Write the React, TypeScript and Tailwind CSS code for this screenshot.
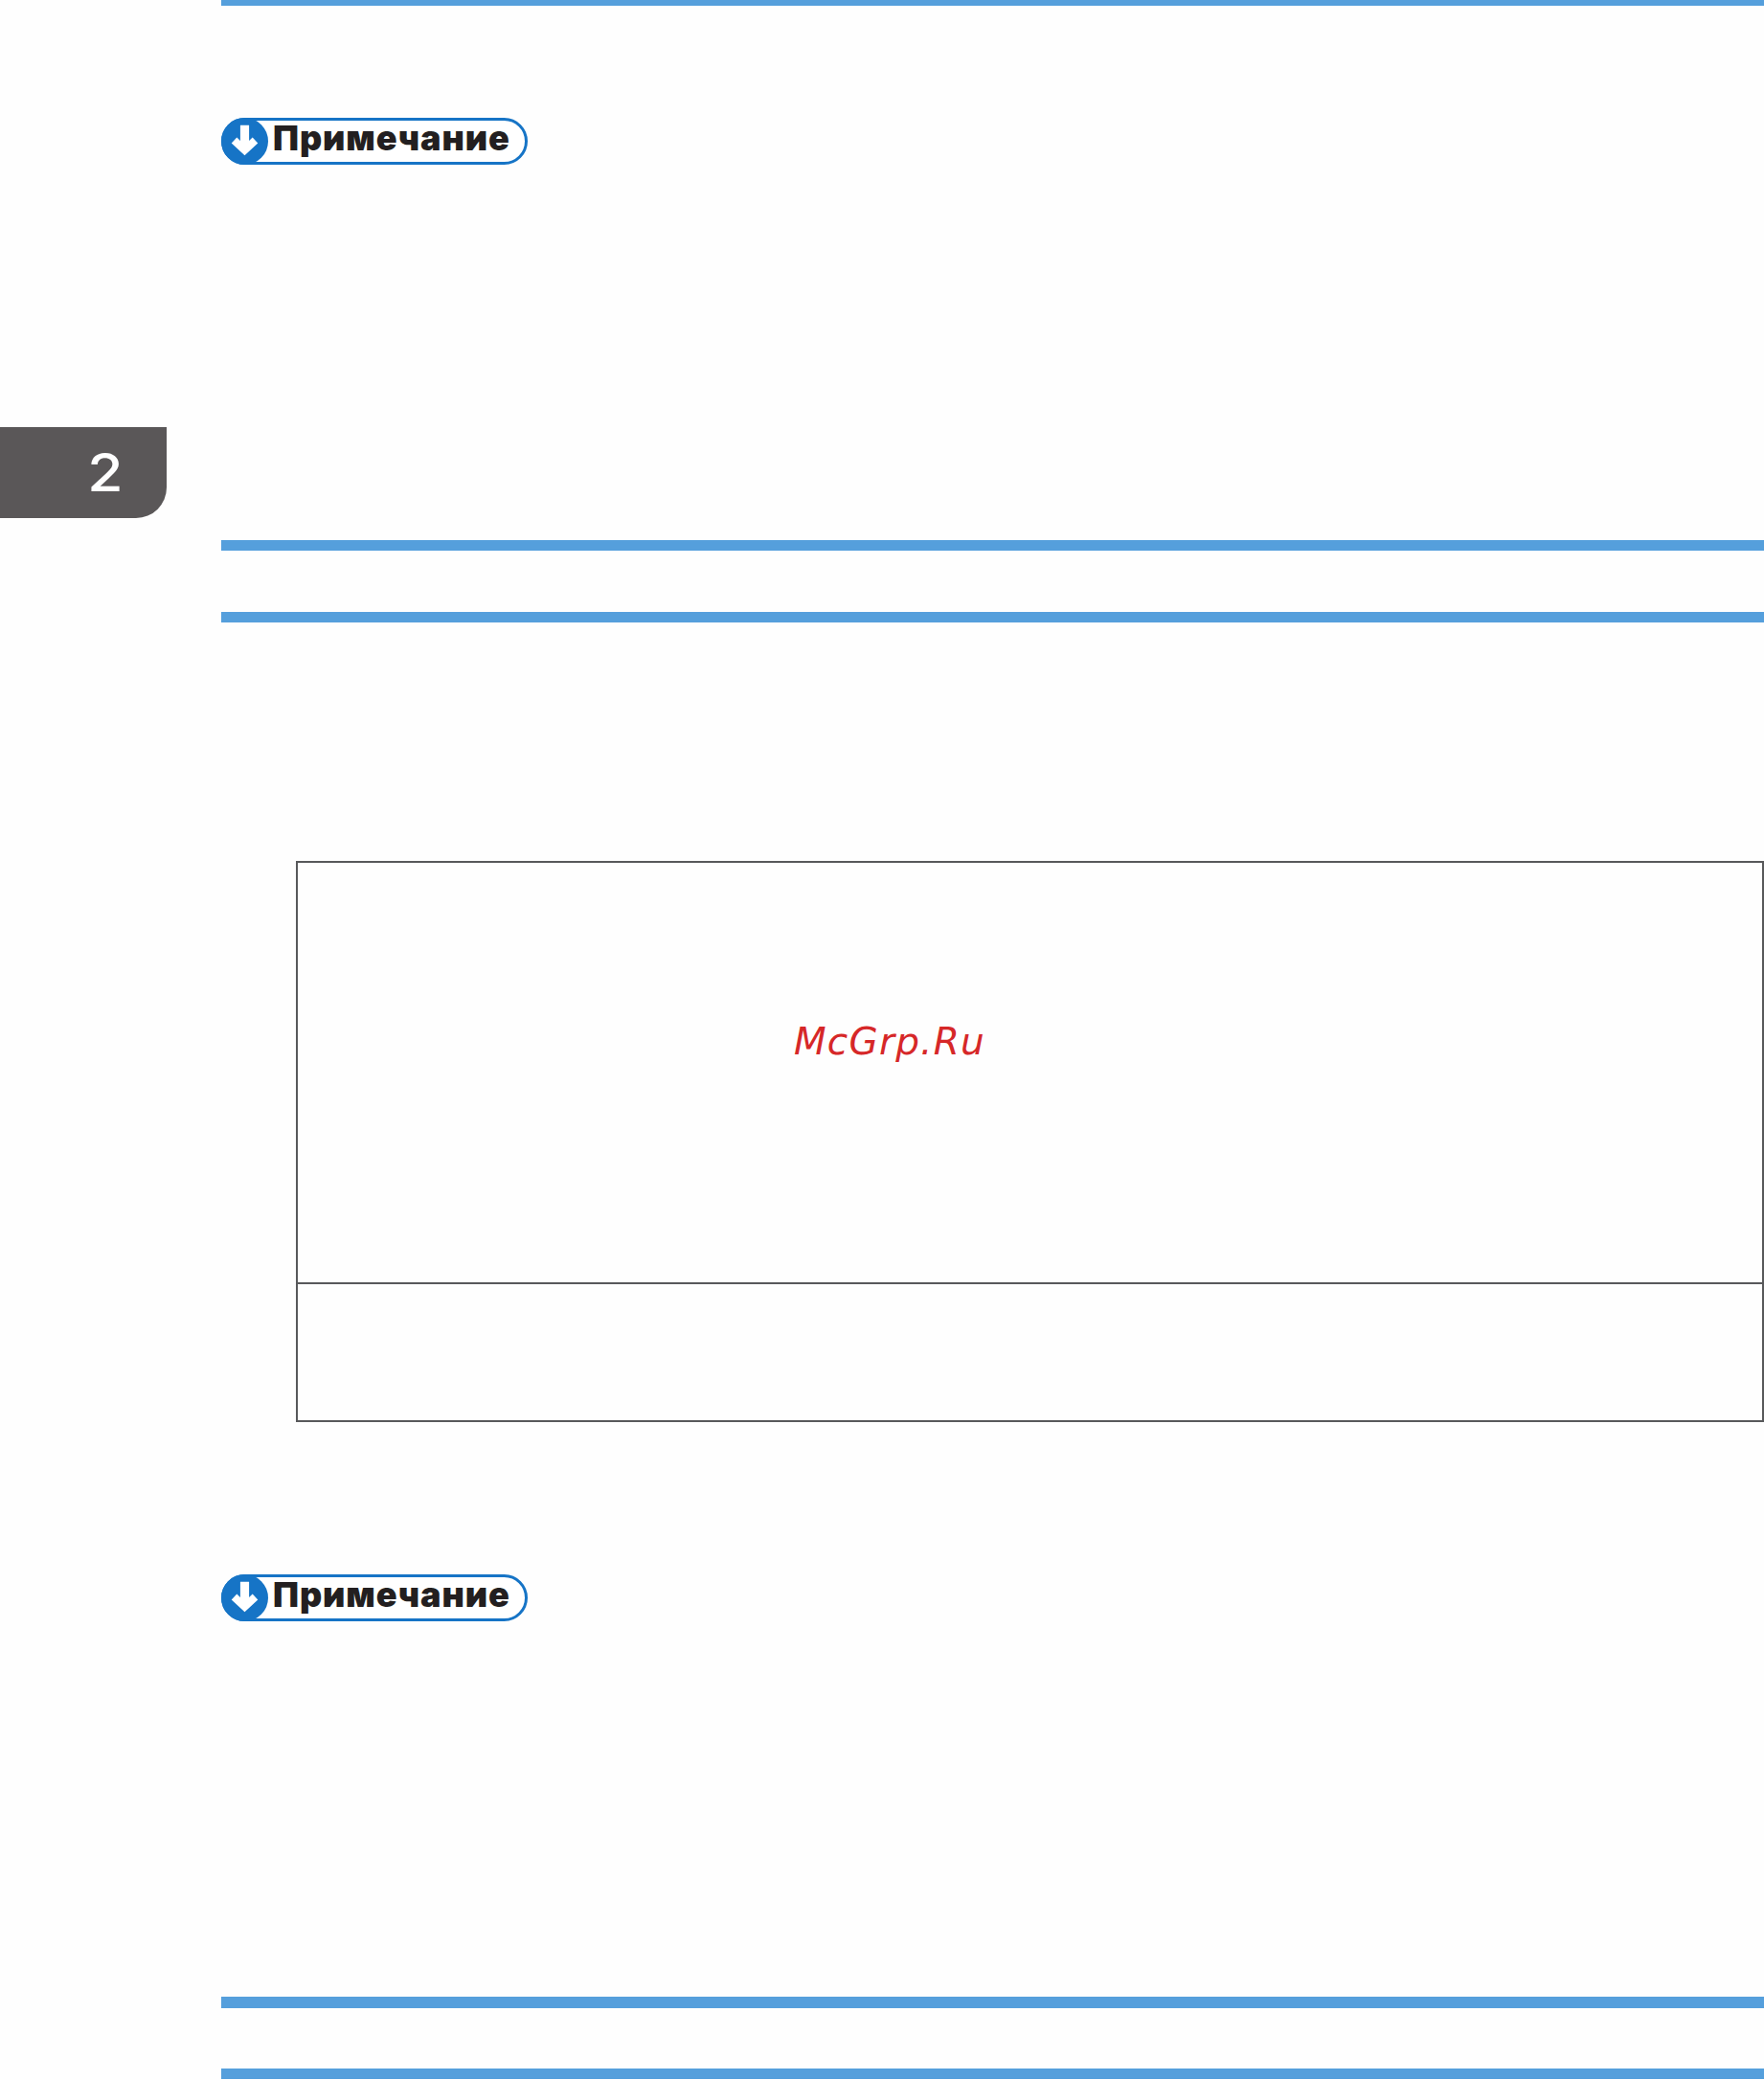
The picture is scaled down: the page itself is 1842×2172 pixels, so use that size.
function NoteBadge() {
  return (
    <div className="flex items-center w-[320px] h-[49px] rounded-full border-[3px] border-[#1674c6] bg-white">
      <div className="-ml-[3px] w-[49px] h-[49px] shrink-0 rounded-full bg-[#1674c6]">
        <svg viewBox="0 0 48 48" className="w-[49px] h-[49px]">
          <polygon
            points="10.5,26 24,38.5 37.5,26 32,20 28.5,23.5 28.5,7.5 19.5,7.5 19.5,23.5 16,20"
            fill="#ffffff"
          />
        </svg>
      </div>
      <span className="ml-[5px] -mt-[8px] font-['Inter',sans-serif] font-black text-[36px] leading-none tracking-[0.9px] text-[#231f20]">
        Примечание
      </span>
    </div>
  );
}

function Bar({ className }: { className: string }) {
  return <div className={`w-full bg-[#559fdc] ${className}`} />;
}

export default function App() {
  return (
    <div className="flex w-[1842px] h-[2172px] overflow-hidden bg-[#fefefe]">
      <div className="w-[231px] shrink-0 pt-[446px]">
        <div className="flex items-center justify-end w-[174px] h-[95px] pr-[47px] rounded-br-[32px] bg-[#5a5758]">
          <span className="scale-x-[1.1] font-['Inter',sans-serif] font-medium text-[55px] leading-none text-white">
            2
          </span>
        </div>
      </div>

      <div className="flex-1 flex flex-col">
        <Bar className="h-[6px]" />
        <div className="mt-[117px]">
          <NoteBadge />
        </div>
        <Bar className="mt-[392px] h-[11px]" />
        <Bar className="mt-[64px] h-[11px]" />

        <div className="mt-[249px] ml-[78px] h-[586px] flex flex-col border-2 border-[#58595b]">
          <div className="h-[440px] pl-[518px] pt-[167px] border-b-2 border-[#58595b]">
            <span className="font-['DejaVu_Sans',sans-serif] italic text-[39px] leading-none tracking-[1.2px] text-[#d62728]">
              McGrp.Ru
            </span>
          </div>
          <div className="flex-1" />
        </div>

        <div className="mt-[159px]">
          <NoteBadge />
        </div>
        <Bar className="mt-[392px] h-[12px]" />
        <Bar className="mt-[63px] h-[11px]" />
      </div>
    </div>
  );
}
